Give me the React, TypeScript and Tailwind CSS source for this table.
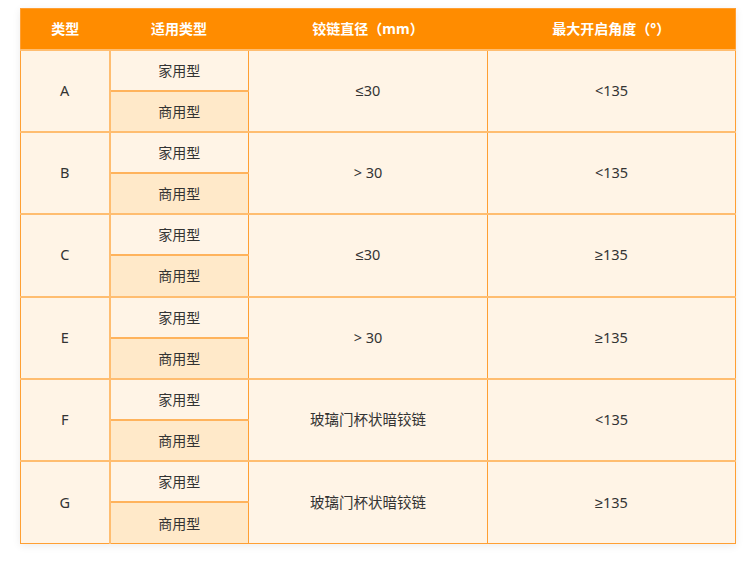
import React from 'react';

interface Row {
  type: string;
  diameter: string;
  angle: string;
}

const rows: Row[] = [
  { type: 'A', diameter: '≤30', angle: '<135' },
  { type: 'B', diameter: '> 30', angle: '<135' },
  { type: 'C', diameter: '≤30', angle: '≥135' },
  { type: 'E', diameter: '> 30', angle: '≥135' },
  { type: 'F', diameter: '玻璃门杯状暗铰链', angle: '<135' },
  { type: 'G', diameter: '玻璃门杯状暗铰链', angle: '≥135' },
];

const valueFont = { fontFamily: '"Noto Sans", "Liberation Sans", "Noto Sans CJK SC", sans-serif' };

const App: React.FC = () => {
  return (
    <div
      className="w-[755px] h-[561px] bg-white pt-[8px] pl-[20px]"
      style={{ fontFamily: '"Noto Sans", "Noto Sans CJK SC", sans-serif' }}
    >
      <table className="w-[715px] table-fixed border-collapse text-[14px] text-[#333] shadow-[0_2px_8px_rgba(0,0,0,0.08)] border border-[#ff9f33]">
        <colgroup>
          <col className="w-[89px]" />
          <col className="w-[139px]" />
          <col className="w-[239px]" />
          <col className="w-[248px]" />
        </colgroup>
        <thead>
          <tr className="h-[41px] bg-[#ff8c00] text-white font-bold">
            <th className="font-bold">类型</th>
            <th className="font-bold">适用类型</th>
            <th className="font-bold">铰链直径（mm）</th>
            <th className="font-bold">最大开启角度（°）</th>
          </tr>
        </thead>
        <tbody>
          {rows.map((row) => (
            <React.Fragment key={row.type}>
              <tr className="h-[41px] border-t-2 border-[#ffbd70]">
                <td
                  rowSpan={2}
                  className="bg-[#fff4e6] text-center text-[14.5px] border-r-2 border-[#ffbd70]"
                >
                  {row.type}
                </td>
                <td className="bg-[#fff4e6] text-center border-b-2 border-[#ffb35c]">家用型</td>
                <td
                  rowSpan={2}
                  className="bg-[#fff4e6] text-center text-[14.5px] border-l border-[#ff9f33]"
                  style={valueFont}
                >
                  {row.diameter}
                </td>
                <td
                  rowSpan={2}
                  className="bg-[#fff4e6] text-center text-[14.5px] border-l border-[#ff9f33]"
                  style={valueFont}
                >
                  {row.angle}
                </td>
              </tr>
              <tr className="h-[41.35px]">
                <td className="bg-[#ffe9c9] text-center">商用型</td>
              </tr>
            </React.Fragment>
          ))}
        </tbody>
      </table>
    </div>
  );
};

export default App;
